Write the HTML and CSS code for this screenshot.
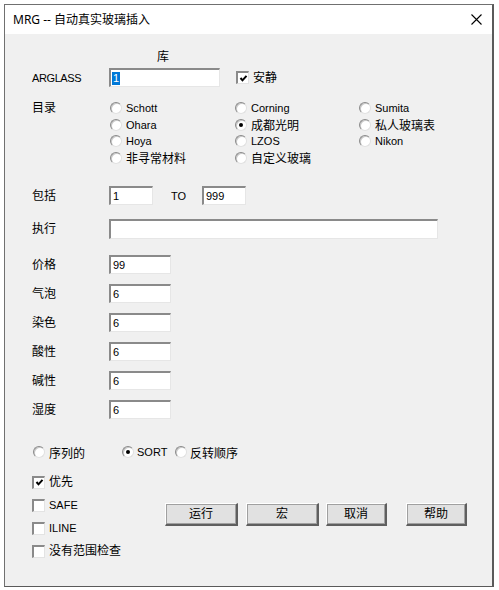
FILE: index.html
```html
<!DOCTYPE html>
<html>
<head>
<meta charset="utf-8">
<link rel="stylesheet" href="styles.css">
</head>
<body>
<div class="window">
  <div class="titlebar">
    <span class="title">MRG -- 自动真实玻璃插入</span>
    <svg class="close" width="11" height="11" viewBox="0 0 11 11"><path d="M0.5 0.5 L10.5 10.5 M10.5 0.5 L0.5 10.5" stroke="#000" stroke-width="1.1" fill="none"/></svg>
  </div>
  <div class="content">
    <div class="lib-head">库</div>

    <div class="row r-arglass">
      <span class="lbl en">ARGLASS</span>
      <span class="edit w111"><span class="sel">1</span></span>
      <span class="chk ml16"><span class="cb"><svg width="9" height="9" viewBox="0 0 9 9"><path d="M1.5 4 L3.5 6.3 L7.5 1.8" stroke="#000" stroke-width="2" fill="none"/></svg></span><span class="cbt">安静</span></span>
    </div>

    <div class="cat">
      <span class="lbl cat-lbl">目录</span>
      <div class="cat-grid">
        <span class="rad"><i class="ro"></i><span class="en">Schott</span></span>
        <span class="rad"><i class="ro"></i><span class="en">Corning</span></span>
        <span class="rad"><i class="ro"></i><span class="en">Sumita</span></span>
        <span class="rad"><i class="ro"></i><span class="en">Ohara</span></span>
        <span class="rad"><i class="ro on"></i><span>成都光明</span></span>
        <span class="rad"><i class="ro"></i><span>私人玻璃表</span></span>
        <span class="rad"><i class="ro"></i><span class="en">Hoya</span></span>
        <span class="rad"><i class="ro"></i><span class="en">LZOS</span></span>
        <span class="rad"><i class="ro"></i><span class="en">Nikon</span></span>
        <span class="rad"><i class="ro"></i><span>非寻常材料</span></span>
        <span class="rad"><i class="ro"></i><span>自定义玻璃</span></span>
      </div>
    </div>

    <div class="row r-incl">
      <span class="lbl">包括</span>
      <span class="edit w44"><span class="ev">1</span></span>
      <span class="to en">TO</span>
      <span class="edit w44"><span class="ev">999</span></span>
    </div>

    <div class="row r-exec">
      <span class="lbl">执行</span>
      <span class="edit w329"></span>
    </div>

    <div class="row r-first">
      <span class="lbl">价格</span>
      <span class="edit w62"><span class="ev">99</span></span>
    </div>
    <div class="row r-next">
      <span class="lbl">气泡</span>
      <span class="edit w62"><span class="ev">6</span></span>
    </div>
    <div class="row r-next">
      <span class="lbl">染色</span>
      <span class="edit w62"><span class="ev">6</span></span>
    </div>
    <div class="row r-next">
      <span class="lbl">酸性</span>
      <span class="edit w62"><span class="ev">6</span></span>
    </div>
    <div class="row r-next">
      <span class="lbl">碱性</span>
      <span class="edit w62"><span class="ev">6</span></span>
    </div>
    <div class="row r-next">
      <span class="lbl">湿度</span>
      <span class="edit w62"><span class="ev">6</span></span>
    </div>

    <div class="sortrow">
      <span class="rad s1"><i class="ro"></i><span>序列的</span></span>
      <span class="rad s2"><i class="ro on"></i><span class="en">SORT</span></span>
      <span class="rad s3"><i class="ro"></i><span>反转顺序</span></span>
    </div>

    <div class="bottom">
      <div class="checks">
        <span class="chk"><span class="cb"><svg width="9" height="9" viewBox="0 0 9 9"><path d="M1.5 4 L3.5 6.3 L7.5 1.8" stroke="#000" stroke-width="2" fill="none"/></svg></span><span class="cbt">优先</span></span>
        <span class="chk"><span class="cb"></span><span class="cbt en">SAFE</span></span>
        <span class="chk"><span class="cb"></span><span class="cbt en">ILINE</span></span>
        <span class="chk"><span class="cb"></span><span class="cbt">没有范围检查</span></span>
      </div>
      <div class="buttons">
        <span class="btn bw73">运行</span>
        <span class="btn bw73 g8">宏</span>
        <span class="btn bw61 g7">取消</span>
        <span class="btn bw61 g19">帮助</span>
      </div>
    </div>
  </div>
</div>
</body>
</html>
```

FILE: styles.css
```css
html, body {
  margin: 0;
  padding: 0;
  background: #ffffff;
}
body {
  font-family: "Liberation Sans", "Noto Sans CJK SC", sans-serif;
  font-size: 12px;
  color: #000;
}
.window {
  margin: 4px 0 0 4px;
  width: 490px;
  height: 583px;
  box-sizing: border-box;
  border: 1px solid #707070;
  border-right: 2px solid #5a5a5a;
  border-bottom: 1px solid #5a5a5a;
  display: flex;
  flex-direction: column;
  background: #f0f0f0;
}
.titlebar {
  height: 29px;
  flex: none;
  background: #fff;
  display: flex;
  align-items: center;
  justify-content: space-between;
  padding: 0 10px 0 8px;
}
.title {
  font-family: "Noto Sans", "Noto Sans CJK SC", sans-serif;
  font-size: 12px;
  color: #000;
  position: relative;
  top: -1px;
}
.close {
  display: block;
  margin-top: -1px;
}
.content {
  flex: 1;
  padding-left: 27px;
  background: #f0f0f0;
}
.en {
  font-size: 11px;
}
.lib-head {
  margin: 16px 0 0 125px;
  height: 14px;
  line-height: 14px;
}
.row {
  display: flex;
  align-items: center;
  height: 19px;
}
.lbl {
  width: 77px;
  flex: none;
  line-height: 14px;
}
.r-arglass { margin-top: 4px; }
.r-arglass .lbl { letter-spacing: -0.4px; }
.edit {
  box-sizing: border-box;
  height: 19px;
  background: #fff;
  border-style: solid;
  border-width: 2px 1px 1px 2px;
  border-color: #8a8a8a #e6e6e6 #e6e6e6 #8a8a8a;
  display: flex;
  align-items: center;
  padding-left: 1px;
  font-size: 11px;
  flex: none;
}
.ev { line-height: 13px; padding-left: 1px; }
.sel {
  background: #0078d7;
  color: #fff;
  line-height: 13px;
  padding: 0 1px;
}
.w111 { width: 111px; }
.w44 { width: 44px; }
.w62 { width: 62px; }
.w329 { width: 329px; }
.ml16 { margin-left: 16px; }
.chk {
  display: flex;
  align-items: center;
  height: 16px;
}
.cb {
  box-sizing: border-box;
  width: 13px;
  height: 13px;
  background: #fff;
  border-style: solid;
  border-width: 2px 1px 1px 2px;
  border-color: #8a8a8a #e3e3e3 #e3e3e3 #8a8a8a;
  display: flex;
  align-items: center;
  justify-content: center;
  flex: none;
}
.cb svg { display: block; }
.cbt { margin-left: 4px; line-height: 14px; }

.cat {
  display: flex;
  margin-top: 13px;
}
.cat-lbl { padding-top: 1px; }
.cat-grid {
  display: grid;
  grid-template-columns: 125px 124px 120px;
  grid-auto-rows: 16.5px;
}
.rad {
  display: flex;
  align-items: center;
  white-space: nowrap;
}
.ro {
  display: block;
  width: 12px;
  height: 12px;
  box-sizing: border-box;
  border-radius: 50%;
  background: #fff;
  border: 1px solid;
  border-color: #8a8a8a #e0e0e0 #e0e0e0 #8a8a8a;
  box-shadow: inset 1px 1px 0 #c8c8c8;
  margin: 0 4px 0 1px;
  flex: none;
  position: relative;
}
.ro.on::after {
  content: "";
  position: absolute;
  left: 3px;
  top: 3px;
  width: 4px;
  height: 4px;
  border-radius: 50%;
  background: #000;
}

.r-incl { margin-top: 20px; }
.to {
  width: 31px;
  margin-left: 18px;
  flex: none;
}
.r-exec { margin-top: 14px; height: 20px; }
.r-exec .edit { height: 20px; }
.r-first { margin-top: 16px; }
.r-next { margin-top: 10px; }

.sortrow {
  display: flex;
  align-items: center;
  height: 16px;
  margin-top: 25px;
}
.s1 { width: 89px; }
.s2 { width: 53px; }
.s2 .ro, .s3 .ro { margin-right: 3px; }

.bottom {
  display: flex;
  margin-top: 14px;
}
.checks {
  width: 133px;
  display: flex;
  flex-direction: column;
  gap: 7px;
}
.buttons {
  display: flex;
  margin-top: 29px;
  align-items: flex-start;
}
.btn {
  box-sizing: border-box;
  height: 23px;
  background: #e1e1e1;
  border-style: solid;
  border-width: 1px 2px 2px 1px;
  border-color: #fff #5f5f5f #5f5f5f #fff;
  box-shadow: 0 0 0 1px #a0a0a0 inset;
  display: flex;
  align-items: center;
  justify-content: center;
  line-height: 14px;
}
.bw73 { width: 73px; }
.bw61 { width: 61px; }
.g8 { margin-left: 8px; }
.g7 { margin-left: 7px; }
.g19 { margin-left: 19px; }
```
